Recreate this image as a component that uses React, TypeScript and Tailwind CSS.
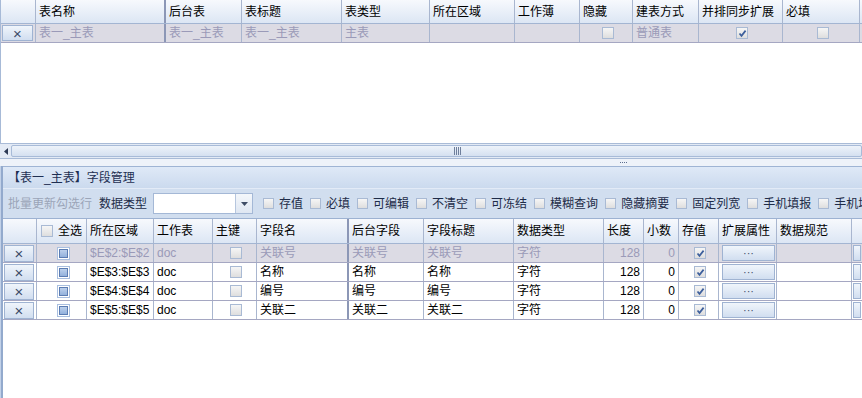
const FONT = '"Liberation Sans", "Noto Sans CJK SC", sans-serif'

function Check({ on = false, small = false }: { on?: boolean; small?: boolean }) {
  return (
    <span className={`inline-flex shrink-0 items-center justify-center ${small ? 'w-[11px] h-[11px]' : 'w-[12px] h-[12px]'} border border-[#a9bad4] bg-gradient-to-b from-[#f6f6f6] to-[#dedede]`}>
      {on && (
        <svg width="9" height="9" viewBox="0 0 9 9">
          <path d="M1.5 4.5 L3.5 6.8 L7.6 1.6" fill="none" stroke="#3d5f9c" strokeWidth="1.7" />
        </svg>
      )}
    </span>
  )
}

function BlueBox() {
  return (
    <span className="inline-flex items-center justify-center w-[13px] h-[13px] border border-[#a9bfe0] bg-white">
      <span className="w-[9px] h-[9px] border border-[#5c7db3] bg-gradient-to-b from-[#bcd0ec] to-[#93b1dc]" />
    </span>
  )
}

function DelBtn() {
  return (
    <div className="w-full h-full flex items-center justify-center border border-[#9fb3d2] bg-gradient-to-b from-[#f0f5fb] to-[#d1def0] text-[#3c4b68] text-[15px] leading-none">
      ×
    </div>
  )
}

const topCols = [
  { t: '', w: 'w-[35px]' },
  { t: '表名称', w: 'w-[130px] border-r-2 border-r-[#8c97b6]' },
  { t: '后台表', w: 'w-[76px]' },
  { t: '表标题', w: 'w-[100px]' },
  { t: '表类型', w: 'w-[88px]' },
  { t: '所在区域', w: 'w-[85px]' },
  { t: '工作薄', w: 'w-[65px]' },
  { t: '隐藏', w: 'w-[53px]' },
  { t: '建表方式', w: 'w-[66px]' },
  { t: '并排同步扩展', w: 'w-[84px]' },
  { t: '必填', w: 'w-[77px]' },
]

const lowCols = [
  { t: '', w: 'w-[34px]' },
  { t: '全选', w: 'w-[50px]' },
  { t: '所在区域', w: 'w-[67px]' },
  { t: '工作表', w: 'w-[59px]' },
  { t: '主键', w: 'w-[44px]' },
  { t: '字段名', w: 'w-[92px] border-r-2 border-r-[#8c97b6]' },
  { t: '后台字段', w: 'w-[75px]' },
  { t: '字段标题', w: 'w-[90px]' },
  { t: '数据类型', w: 'w-[90px]' },
  { t: '长度', w: 'w-[40px]' },
  { t: '小数', w: 'w-[35px]' },
  { t: '存值', w: 'w-[40px]' },
  { t: '扩展属性', w: 'w-[58px]' },
  { t: '数据规范', w: 'w-[75px]' },
]

const rows = [
  { area: '$E$2:$E$2', name: '关联号', dim: true },
  { area: '$E$3:$E$3', name: '名称', dim: false },
  { area: '$E$4:$E$4', name: '编号', dim: false },
  { area: '$E$5:$E$5', name: '关联二', dim: false },
]

const opts = ['存值', '必填', '可编辑', '不清空', '可冻结', '模糊查询', '隐藏摘要', '固定列宽', '手机填报', '手机填报']

export default function App() {
  const cell = 'shrink-0 h-full flex items-center border-r border-[#a9b6cf] pl-[3px] overflow-hidden whitespace-nowrap'
  return (
    <div className="w-[862px] h-[398px] overflow-hidden bg-white text-[12px] text-black" style={{ fontFamily: FONT }}>
      {/* top grid */}
      <div className="h-[143px] border-l border-[#a7bad7] flex flex-col">
        <div className="h-[24px] flex border-b border-[#a3b5d2] bg-gradient-to-b from-[#f7f9fd] to-[#dce6f4]">
          {topCols.map((c, i) => (
            <div key={i} className={`${cell} ${c.w}`}>{c.t}</div>
          ))}
          <div className="flex-1" />
        </div>
        <div className="h-[19px] flex border-b border-[#a5a7c2] bg-[#dcdbe4] text-[#9a9ab8]">
          <div className="w-[35px] shrink-0 h-full p-px pr-[2px] border-r border-[#a9b6cf]"><DelBtn /></div>
          <div className={`${cell} w-[130px] border-r-2 border-r-[#8c97b6]`}>表一_主表</div>
          <div className={`${cell} w-[76px]`}>表一_主表</div>
          <div className={`${cell} w-[100px]`}>表一_主表</div>
          <div className={`${cell} w-[88px]`}>主表</div>
          <div className={`${cell} w-[85px]`} />
          <div className={`${cell} w-[65px]`} />
          <div className={`${cell} w-[53px] justify-center pl-0`}><Check /></div>
          <div className={`${cell} w-[66px]`}>普通表</div>
          <div className={`${cell} w-[84px] justify-center pl-0`}><Check on /></div>
          <div className={`${cell} w-[77px] justify-center pl-0`}><Check /></div>
          <div className="flex-1" />
        </div>
      </div>

      {/* scrollbar */}
      <div className="h-[15px] flex border-t border-[#a9bbd7] bg-[#e3eaf5]">
        <div className="w-[11px] flex items-center justify-center">
          <svg width="4" height="7" viewBox="0 0 4 7"><path d="M4 0 L0 3.5 L4 7 Z" fill="#2d3a55" /></svg>
        </div>
        <div className="flex-1 my-px rounded-[2px] border border-[#a8bbd8] bg-gradient-to-b from-[#eef3fa] to-[#d5e0f0] flex items-center pl-[442px]">
          <svg width="7" height="8" viewBox="0 0 7 8">
            <path d="M0.5 0 V8 M2.5 0 V8 M4.5 0 V8 M6.5 0 V8" stroke="#6f7f9c" strokeWidth="1" />
          </svg>
        </div>
      </div>

      {/* splitter */}
      <div className="h-[8px] border-t border-[#a9bbd7] bg-[#eef2f9] flex items-center pl-[620px]">
        <div className="flex gap-px">
          {[0, 1, 2, 3].map((d) => <span key={d} className="w-px h-px bg-[#5d6f90]" />)}
        </div>
      </div>

      {/* lower panel */}
      <div className="h-[232px] border-l border-[#c2d1e8] flex flex-col">
        <div className="h-full border-l-2 border-[#93aacd] flex flex-col">
          <div className="h-[22px] shrink-0 border-t border-[#9fb4d4] bg-gradient-to-b from-[#dfe9f7] to-[#cbdaee] flex items-center pl-[5px] text-[#1e2f52]">
            【表一_主表】字段管理
          </div>
          <div className="h-[31px] shrink-0 border-t border-[#e3ebf7] border-b border-b-[#9db2d2] bg-[#d1deef] flex items-center pl-[5px] whitespace-nowrap text-[#1e2c48]">
            <span className="text-[#9ba5b8]">批量更新勾选行</span>
            <span className="ml-[7px]">数据类型</span>
            <div className="ml-[6px] w-[100px] h-[21px] shrink-0 border border-[#a4b8d6] bg-white flex justify-end">
              <div className="w-[17px] h-full border-l border-[#b6c6de] bg-gradient-to-b from-[#f4f7fb] to-[#dfe7f2] flex items-center justify-center">
                <svg width="7" height="4" viewBox="0 0 7 4"><path d="M0 0 H7 L3.5 4 Z" fill="#3f4d66" /></svg>
              </div>
            </div>
            {opts.map((o, i) => (
              <span key={i} className={`flex items-center shrink-0 ${i === 0 ? 'ml-[10px]' : 'ml-[7px]'}`}>
                <Check small />
                <span className="ml-[5px]">{o}</span>
              </span>
            ))}
          </div>

          {/* lower grid */}
          <div className="h-[25px] shrink-0 flex border-b border-[#a3b5d2] bg-gradient-to-b from-[#f7f9fd] to-[#dce6f4]">
            {lowCols.map((c, i) => (
              <div key={i} className={`${cell} ${c.w}`}>
                {i === 1 ? (
                  <span className="flex items-center gap-[5px] pl-[1px]"><Check /><span>全选</span></span>
                ) : c.t}
              </div>
            ))}
            <div className="flex-1" />
          </div>
          {rows.map((r, k) => (
            <div key={k} className={`h-[19px] shrink-0 flex border-b border-[#a5a7c2] ${r.dim ? 'bg-[#dcdbe4] text-[#9a9ab8]' : 'bg-white'}`}>
              <div className="w-[34px] shrink-0 h-full pt-px pl-px pr-[2px] border-r border-[#a9b6cf]"><DelBtn /></div>
              <div className={`${cell} w-[50px] justify-center pl-0`}><BlueBox /></div>
              <div className={`${cell} w-[67px]`}>{r.area}</div>
              <div className={`${cell} w-[59px]`}>doc</div>
              <div className={`${cell} w-[44px] justify-center pl-0`}><Check /></div>
              <div className={`${cell} w-[92px] border-r-2 border-r-[#8c97b6]`}>{r.name}</div>
              <div className={`${cell} w-[75px]`}>{r.name}</div>
              <div className={`${cell} w-[90px]`}>{r.name}</div>
              <div className={`${cell} w-[90px]`}>字符</div>
              <div className={`${cell} w-[40px] justify-end pr-[3px]`}>128</div>
              <div className={`${cell} w-[35px] justify-end pr-[3px]`}>0</div>
              <div className={`${cell} w-[40px] justify-center pl-0`}><Check on /></div>
              <div className={`${cell} w-[58px] pl-0 p-px`}>
                <div className="w-full h-full flex items-center justify-center border border-[#9fb3d2] bg-gradient-to-b from-[#f0f5fb] to-[#d1def0] text-[#3c4b68] text-[11px] leading-none">···</div>
              </div>
              <div className={`${cell} w-[75px]`} />
              <div className="flex-1 h-full p-px">
                <div className="w-full h-full border border-[#9fb3d2] bg-gradient-to-b from-[#f0f5fb] to-[#d1def0]" />
              </div>
            </div>
          ))}
          <div className="flex-1 bg-white" />
        </div>
      </div>
    </div>
  )
}
